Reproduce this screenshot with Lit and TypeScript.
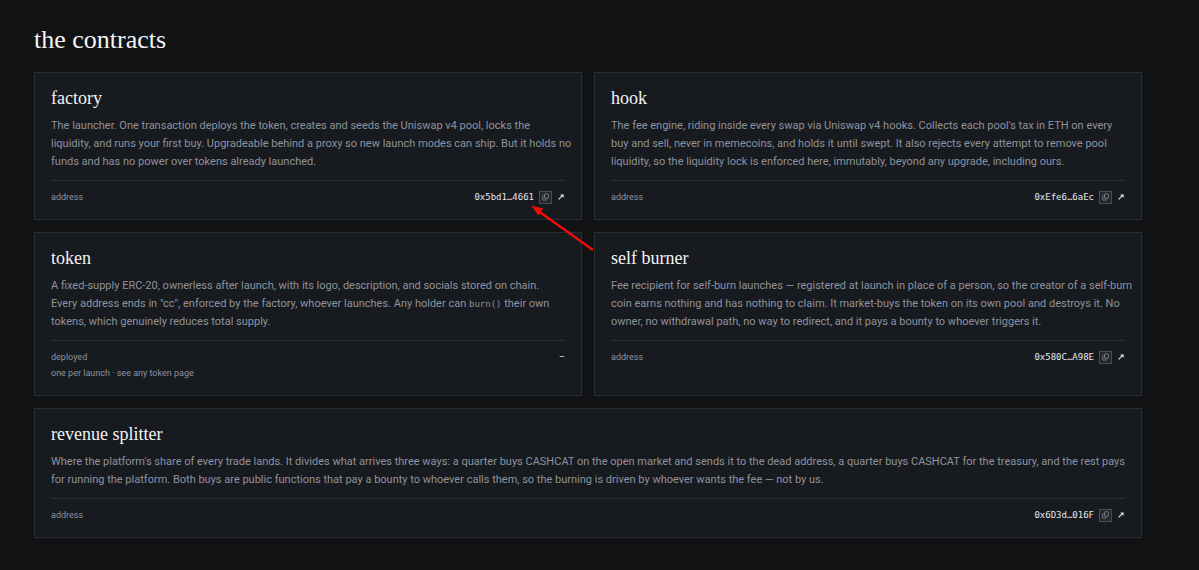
import { LitElement, html, css, svg, nothing, TemplateResult } from "lit";
import { customElement, property } from "lit/decorators.js";

interface Contract {
  name: string;
  text: TemplateResult;
  label: string;
  address?: string;
  note?: string;
  wide?: boolean;
}

const contracts: Contract[] = [
  {
    name: "factory",
    text: html`The launcher. One transaction deploys the token, creates and seeds the Uniswap v4 pool, locks the<br />liquidity, and runs your first buy. Upgradeable behind a proxy so new launch modes can ship. But it holds no funds and has no power over tokens already launched.`,
    label: "address",
    address: "0x5bd1…4661",
  },
  {
    name: "hook",
    text: html`The fee engine, riding inside every swap via Uniswap v4 hooks. Collects each pool's tax in ETH on every<br />buy and sell, never in memecoins, and holds it until swept. It also rejects every attempt to remove pool liquidity, so the liquidity lock is enforced here, immutably, beyond any upgrade, including ours.`,
    label: "address",
    address: "0xEfe6…6aEc",
  },
  {
    name: "token",
    text: html`A fixed-supply ERC-20, ownerless after launch, with its logo, description, and socials stored on chain.<br />Every address ends in "cc", enforced by the factory, whoever launches. Any holder can <code>burn()</code> their own tokens, which genuinely reduces total supply.`,
    label: "deployed",
    note: "one per launch · see any token page",
  },
  {
    name: "self burner",
    text: html`Fee recipient for self-burn launches — registered at launch in place of a person, so the creator of a self-burn coin earns nothing and has nothing to claim. It market-buys the token on its own pool and destroys it. No owner, no withdrawal path, no way to redirect, and it pays a bounty to whoever triggers it.`,
    label: "address",
    address: "0x580C…A98E",
  },
  {
    name: "revenue splitter",
    text: html`Where the platform's share of every trade lands. It divides what arrives three ways: a quarter buys CASHCAT on the open market and sends it to the dead address, a quarter buys CASHCAT for the treasury, and the rest pays for running the platform. Both buys are public functions that pay a bounty to whoever calls them, so the burning is driven by whoever wants the fee — not by us.`,
    label: "address",
    address: "0x6D3d…016F",
    wide: true,
  },
];

const copyIcon = html`<svg width="7" height="8" viewBox="0 0 7 8" fill="none" stroke="currentColor" aria-hidden="true">
  ${svg`<path d="M2.5 1.5Q2.5.8 3.2.8H5.6Q6.3.8 6.3 1.5V4.6Q6.3 5.3 5.6 5.3H3.2Q2.5 5.3 2.5 4.6Z" stroke-width=".8"/>
  <path d="M1.7 2.6H1.3Q.7 2.6.7 3.3V6.4Q.7 7.1 1.3 7.1H3.8Q4.4 7.1 4.4 6.4" stroke-width=".8"/>`}
</svg>`;

const outIcon = html`<svg width="6" height="6" viewBox="0 0 6 6" aria-hidden="true">
  ${svg`<path d="M.6 5.4L4.6 1.4" stroke="currentColor" stroke-width="1.1"/><path d="M2.2.4H5.6V3.8Z" fill="currentColor"/>`}
</svg>`;

@customElement("contract-card")
export class ContractCard extends LitElement {
  @property({ attribute: false }) contract!: Contract;

  static styles = css`
    :host {
      display: block;
      box-sizing: border-box;
      padding: 15px 16px 14px;
      background: #171a1f;
      border: 1px solid #292c31;
    }
    .name {
      margin: 0 0 9px;
      font: 400 18px/20px "Liberation Serif", serif;
      color: #f4f4f5;
    }
    .text {
      margin: 0 -8px 0 0;
      font-size: 11px;
      line-height: 18px;
      color: #8f929e;
    }
    code {
      font: 9px/1 "DejaVu Sans Mono", monospace;
    }
    .meta {
      margin-top: 9px;
      padding-top: 8px;
      border-top: 1px solid #292c31;
      font-size: 9px;
      line-height: 16px;
      color: #8f929e;
    }
    .row {
      display: flex;
      justify-content: space-between;
      align-items: center;
    }
    .value {
      display: flex;
      align-items: center;
      gap: 5px;
      color: #e8e8ea;
    }
    .address {
      font: 9px/16px "DejaVu Sans Mono", monospace;
    }
    .copy {
      display: grid;
      place-items: center;
      width: 13px;
      height: 13px;
      padding: 0;
      color: #8f929e;
      background: #25282d;
      border: 1px solid #4a4d52;
    }
    .out {
      display: grid;
      place-items: center;
      width: 8px;
      color: inherit;
    }
    .note {
      margin: 0;
    }
  `;

  render() {
    const c = this.contract;
    return html`
      <h2 class="name">${c.name}</h2>
      <p class="text">${c.text}</p>
      <div class="meta">
        <div class="row">
          <span>${c.label}</span>
          ${c.address
            ? html`<span class="value">
                <span class="address">${c.address}</span>
                <button class="copy" type="button" aria-label="Copy">${copyIcon}</button>
                <a class="out" href="#" aria-label="Explorer">${outIcon}</a>
              </span>`
            : html`<span class="value">–</span>`}
        </div>
        ${c.note ? html`<p class="note">${c.note}</p>` : nothing}
      </div>
    `;
  }
}

@customElement("app-root")
export class AppRoot extends LitElement {
  static styles = css`
    :host {
      display: block;
      box-sizing: border-box;
      min-height: 100vh;
      background: #111214;
      font-family: Roboto, "Liberation Sans", sans-serif;
    }
    .page {
      position: relative;
      padding: 24px 57px 31px 34px;
    }
    .title {
      margin: 0 0 16px;
      font: 400 26px/32px "Liberation Serif", serif;
      color: #f4f4f5;
    }
    .grid {
      display: grid;
      grid-template-columns: 1fr 1fr;
      gap: 12px;
    }
    .wide {
      grid-column: 1 / -1;
    }
    .pointer {
      position: absolute;
      left: 530px;
      top: 204px;
      pointer-events: none;
    }
  `;

  render() {
    return html`
      <main class="page">
        <h1 class="title">the contracts</h1>
        <div class="grid">
          ${contracts.map(
            (c) => html`<contract-card class=${c.wide ? "wide" : ""} .contract=${c}></contract-card>`
          )}
        </div>
        <svg class="pointer" width="66" height="48" viewBox="0 0 66 48" aria-hidden="true">
          <path d="M9 7.5L63 46" stroke="#f50b0b" stroke-width="2.2" />
          <path d="M1 1.5L13 4.5L8.5 11.5Z" fill="#f50b0b" />
        </svg>
      </main>
    `;
  }
}
